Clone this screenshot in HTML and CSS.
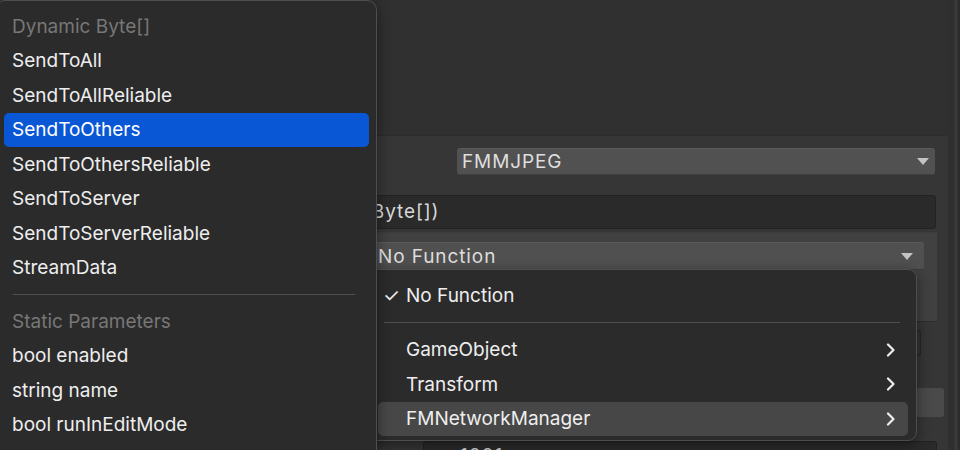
FILE: index.html
```html
<!DOCTYPE html>
<html>
<head>
<meta charset="utf-8">
<link rel="stylesheet" href="styles.css">
</head>
<body>
<div class="screen">
  <div class="inspector">
    <div class="top-area"></div>
    <div class="lower">
      <div class="row row-mode">
        <div class="dropdown mode-dd"><span>FMMJPEG</span><span class="tri"></span></div>
      </div>
      <div class="row row-field">
        <div class="textfield">(Byte[])</div>
      </div>
      <div class="event-panel">
        <div class="dropdown fn-dd"><span>No Function</span><span class="tri"></span></div>
      </div>
      <div class="row row-after">
        <div class="dark-box"></div>
      </div>
      <div class="row row-btn">
        <div class="small-btn"></div>
      </div>
      <div class="row row-last">
        <div class="last-field">1001</div>
      </div>
    </div>
  </div>
  <div class="side-strip"></div>

  <div class="popup">
    <div class="item"><span class="check">✓</span>No Function</div>
    <div class="sep"></div>
    <div class="item">GameObject<span class="chev"><svg width="10" height="14" viewBox="0 0 10 14"><path d="M2 1.5 L7.5 7 L2 12.5" fill="none" stroke="#ececec" stroke-width="2.2" stroke-linecap="round" stroke-linejoin="round"/></svg></span></div>
    <div class="item">Transform<span class="chev"><svg width="10" height="14" viewBox="0 0 10 14"><path d="M2 1.5 L7.5 7 L2 12.5" fill="none" stroke="#ececec" stroke-width="2.2" stroke-linecap="round" stroke-linejoin="round"/></svg></span></div>
    <div class="item hover">FMNetworkManager<span class="chev"><svg width="10" height="14" viewBox="0 0 10 14"><path d="M2 1.5 L7.5 7 L2 12.5" fill="none" stroke="#ececec" stroke-width="2.2" stroke-linecap="round" stroke-linejoin="round"/></svg></span></div>
  </div>

  <div class="menu">
    <div class="item header">Dynamic Byte[]</div>
    <div class="item">SendToAll</div>
    <div class="item">SendToAllReliable</div>
    <div class="item selected">SendToOthers</div>
    <div class="item">SendToOthersReliable</div>
    <div class="item">SendToServer</div>
    <div class="item">SendToServerReliable</div>
    <div class="item">StreamData</div>
    <div class="sep"></div>
    <div class="item header">Static Parameters</div>
    <div class="item">bool enabled</div>
    <div class="item">string name</div>
    <div class="item">bool runInEditMode</div>
  </div>
</div>
</body>
</html>
```

FILE: styles.css
```css
* { box-sizing: border-box; }
html, body { margin: 0; padding: 0; background: #303030; overflow: hidden; }
body { font-family: Inter, "Noto Sans", sans-serif; }

.screen {
  position: relative;
  width: 960px;
  height: 450px;
  display: flex;
  overflow: hidden;
}

.inspector {
  width: 948px;
  height: 450px;
  display: flex;
  flex-direction: column;
  overflow: hidden;
}
.top-area {
  flex: 0 0 136px;
  background: #303030;
  border-bottom: 1px solid #2c2c2c;
}
.lower {
  flex: 0 0 auto;
  background: #363636;
  display: flex;
  flex-direction: column;
}
.side-strip {
  width: 12px;
  background: linear-gradient(to right, #2f2f2f 0, #2f2f2f 6px, #3a3a3a 7px, #3a3a3a 9px, #2c2c2c 10px);
}

.row { display: flex; flex-shrink: 0; }

.dropdown {
  display: flex;
  align-items: center;
  justify-content: space-between;
  color: #dedede;
  font-size: 19px;
  font-weight: 400;
  letter-spacing: 0.9px;
  border-radius: 3px;
  white-space: nowrap;
}
.tri {
  width: 0; height: 0;
  border-left: 6px solid transparent;
  border-right: 6px solid transparent;
  border-top: 7px solid #c4c4c4;
}

.row-mode { padding: 12px 0 0 457px; }
.mode-dd {
  width: 478px;
  height: 27px;
  background: #515151;
  border-top: 1px solid #5a5a5a;
  border-bottom: 1px solid #404040;
  padding: 0 6px 0 5px;
}

.row-field { padding: 20px 0 0 240px; }
.textfield {
  width: 696px;
  height: 34px;
  background: #2a2a2a;
  border: 1px solid #222;
  border-radius: 3px;
  color: #d8d8d8;
  font-size: 19px;
  letter-spacing: 0.9px;
  line-height: 31px;
  padding-left: 123px;
  white-space: nowrap;
}

.event-panel {
  flex-shrink: 0;
  margin: 3px 0 0 240px;
  width: 697px;
  height: 90px;
  background: #414141;
  border-top: 1px solid #3d3d3d;
  border-bottom: 1px solid #2d2d2d;
  padding: 9px 12px 0 136px;
}
.fn-dd {
  width: 548px;
  height: 28px;
  background: #505050;
  border-top: 1px solid #5a5a5a;
  border-bottom: 1px solid #3c3c3c;
  padding: 0 11px 0 2px;
}

.row-after { padding: 8px 0 0 905px; }
.dark-box {
  width: 16px; height: 26px;
  border: 1px solid #262626;
  border-left: none;
  background: #333;
  border-radius: 0 3px 3px 0;
}
.row-btn { padding: 32px 0 0 916px; }
.small-btn {
  width: 28px; height: 29px;
  background: #4a4a4a;
  border-radius: 3px;
}
.row-last { padding: 24px 0 0 423px; }
.last-field {
  width: 514px; height: 30px;
  background: #2a2a2a;
  border: 1px solid #222;
  border-radius: 3px;
  color: #cfcfcf;
  font-size: 19px;
  letter-spacing: 0.9px;
  padding: 2px 0 0 36px;
}

/* popup menus (overlays) */
.menu, .popup {
  position: absolute;
  background: #2b2b2b;
  border: 1px solid #4e4e4e;
  box-shadow: 0 4px 14px rgba(0,0,0,0.45);
  color: #eeeeee;
  font-size: 19px;
  letter-spacing: 0;
}
.menu {
  left: -5px;
  top: 0;
  width: 382px;
  height: 480px;
  border-radius: 10px;
  padding: 8px 0;
  z-index: 2;
}
.popup {
  left: 368px;
  top: 269px;
  width: 549px;
  height: 172px;
  border-radius: 9px;
  padding: 8px 0 5px;
  z-index: 1;
}
.item {
  height: 34.5px;
  display: flex;
  align-items: center;
  border-radius: 5px;
  white-space: nowrap;
}
.menu .item {
  margin: 0 7px 0 8px;
  padding-left: 8px;
}
.menu .header { color: #777777; }
.menu .selected { background: #0a57d6; color: #fff; }
.menu .sep {
  height: 1px;
  background: #4f4f4f;
  margin: 9px 21px 9px 17px;
}
.popup .item {
  margin: 0 8px 0 9px;
  padding-left: 28px;
  padding-right: 12px;
  position: relative;
}
.popup .check {
  position: absolute;
  left: 5px;
  font-size: 19px;
}
.popup .chev { margin-left: auto; display: flex; }
.popup .hover { background: #474747; }
.popup .sep {
  height: 1px;
  background: #4f4f4f;
  margin: 9px 16px 10px 15px;
}
```
